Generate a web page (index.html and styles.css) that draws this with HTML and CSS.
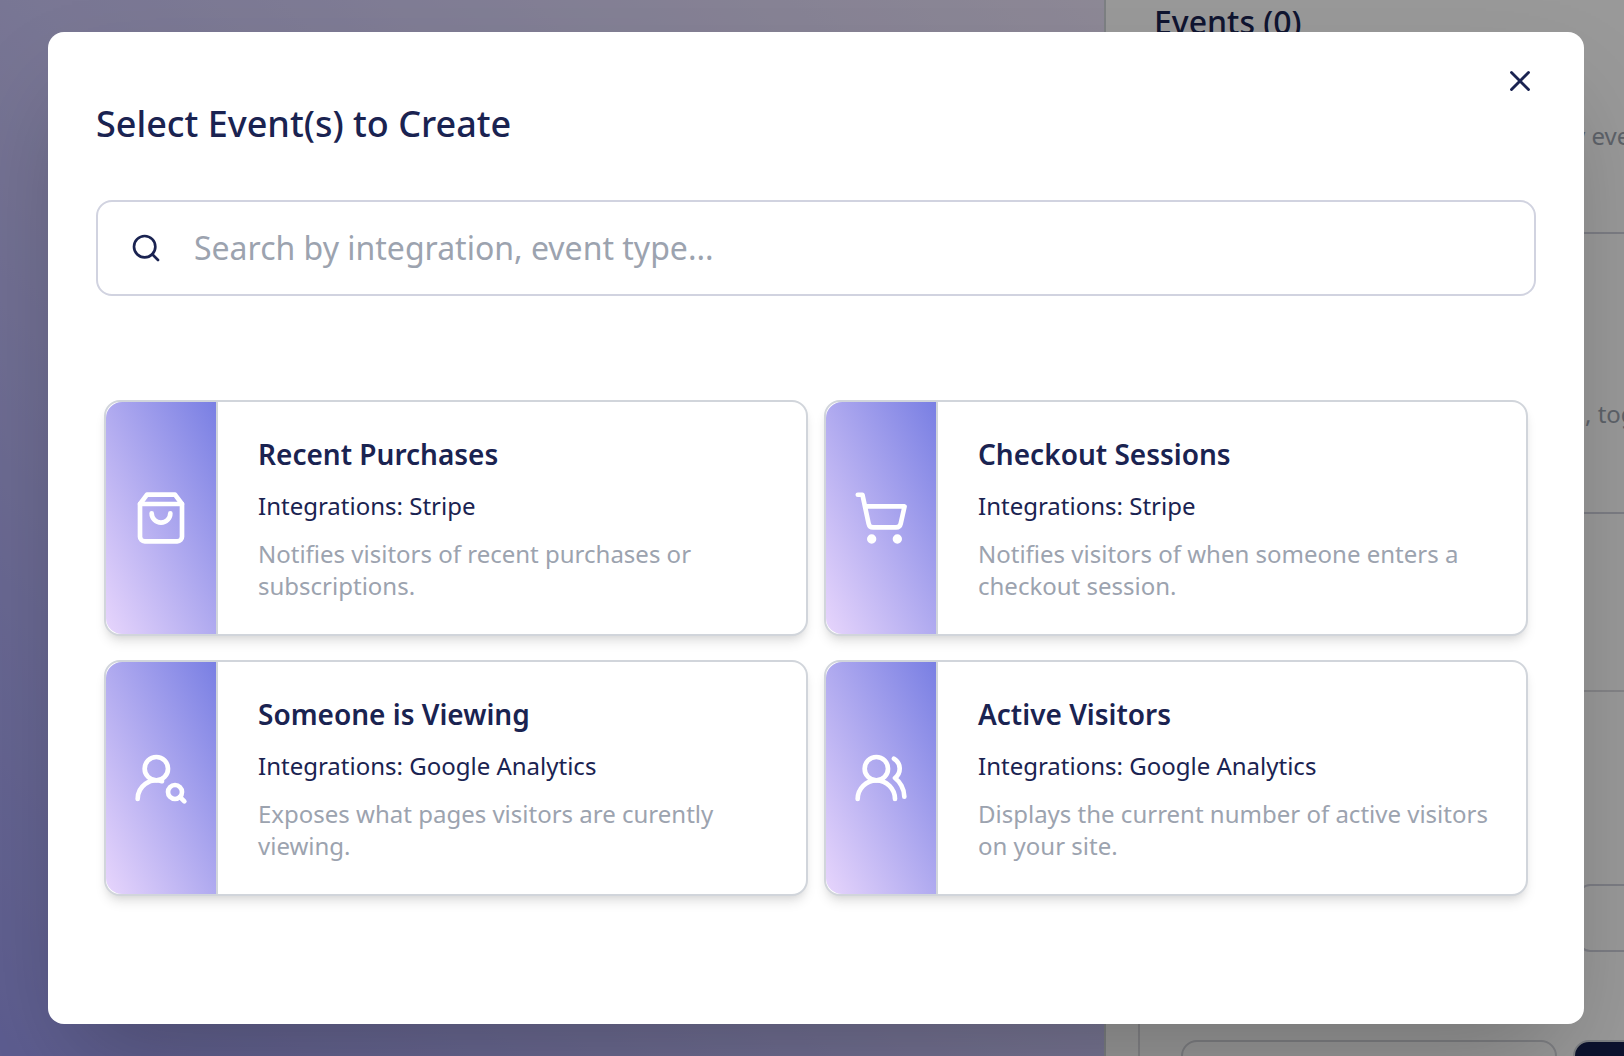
FILE: index.html
```html
<!DOCTYPE html>
<html lang="en">
<head>
<meta charset="utf-8">
<title>Select Event(s) to Create</title>
<link rel="stylesheet" href="styles.css">
</head>
<body>
<div class="page">
  <main class="preview"></main>
  <aside class="sidebar">
    <h2 class="sidebar-title">Events (0)</h2>
    <section class="block block-first"><p class="hint">y eve</p></section>
    <section class="block block-second"><p class="hint">, tog</p></section>
    <section class="block block-third"></section>
    <section class="block-fields"><div class="field"></div></section>
    <section class="footer-box">
      <div class="footer-input"></div>
      <div class="footer-button"></div>
    </section>
  </aside>
</div>
<div class="overlay">
  <div class="modal" role="dialog" aria-labelledby="modal-title">
    <button class="close" aria-label="Close">
      <svg viewBox="0 0 24 24"><path d="M18 6 6 18M6 6l12 12"/></svg>
    </button>
    <h1 class="modal-title" id="modal-title">Select Event(s) to Create</h1>
    <label class="search">
      <svg class="search-icon" viewBox="0 0 24 24"><circle cx="11" cy="11" r="8"/><path d="m21 21-4.3-4.3"/></svg>
      <input class="search-input" type="text" placeholder="Search by integration, event type...">
    </label>
    <div class="cards">
      <article class="card">
        <div class="card-icon"><svg viewBox="0 0 24 24"><path d="M6 2 3 6v14a2 2 0 0 0 2 2h14a2 2 0 0 0 2-2V6l-3-4Z"/><path d="M3 6h18"/><path d="M16 10a4 4 0 0 1-8 0"/></svg></div>
        <div class="card-body">
          <h3 class="card-title">Recent Purchases</h3>
          <p class="card-source">Integrations: Stripe</p>
          <p class="card-text">Notifies visitors of recent purchases or subscriptions.</p>
        </div>
      </article>
      <article class="card">
        <div class="card-icon"><svg viewBox="0 0 24 24"><circle cx="8" cy="21" r="1"/><circle cx="19" cy="21" r="1"/><path d="M2.05 2.05h2l2.66 12.42a2 2 0 0 0 2 1.58h9.78a2 2 0 0 0 1.95-1.57l1.65-7.43H5.12"/></svg></div>
        <div class="card-body">
          <h3 class="card-title">Checkout Sessions</h3>
          <p class="card-source">Integrations: Stripe</p>
          <p class="card-text">Notifies visitors of when someone enters a checkout session.</p>
        </div>
      </article>
      <article class="card">
        <div class="card-icon"><svg viewBox="0 0 24 24"><circle cx="10" cy="8" r="5"/><path d="M2 21a8 8 0 0 1 10.434-7.62"/><circle cx="18" cy="18" r="3"/><path d="m22 22-1.9-1.9"/></svg></div>
        <div class="card-body">
          <h3 class="card-title">Someone is Viewing</h3>
          <p class="card-source">Integrations: Google Analytics</p>
          <p class="card-text">Exposes what pages visitors are curently viewing.</p>
        </div>
      </article>
      <article class="card">
        <div class="card-icon"><svg viewBox="0 0 24 24"><path d="M18 21a8 8 0 0 0-16 0"/><circle cx="10" cy="8" r="5"/><path d="M22 20c0-3.37-2-6.5-4-8a5 5 0 0 0-.45-8.3"/></svg></div>
        <div class="card-body">
          <h3 class="card-title">Active Visitors</h3>
          <p class="card-source">Integrations: Google Analytics</p>
          <p class="card-text">Displays the current number of active visitors on your site.</p>
        </div>
      </article>
    </div>
  </div>
</div>
</body>
</html>
```
FILE: styles.css
```css
* { box-sizing: border-box; }
html, body { margin: 0; height: 100%; overflow: hidden; }
body {
  font-family: "Noto Sans", sans-serif;
  color: #1a2351;
}
h1, h2, h3, p { margin: 0; }
svg {
  display: block;
  fill: none;
  stroke: currentColor;
  stroke-width: 2;
  stroke-linecap: round;
  stroke-linejoin: round;
}

.page {
  display: grid;
  grid-template-columns: 1104px 520px;
  width: 1624px;
  height: 1056px;
  overflow: hidden;
}
.preview { background: linear-gradient(to top right, #9b9bf0, #c9c5f7 50%, #ece4fa); }
.sidebar {
  display: flex;
  flex-direction: column;
  height: 1056px;
  overflow: hidden;
  border-left: 2px solid #d1d5db;
  background: #fff;
}
.sidebar-title {
  height: 48px;
  padding-left: 48px;
  font-size: 32px;
  font-weight: 500;
  line-height: 44px;
}
.block { border-bottom: 2px solid #cfd0dc; }
.block-first { height: 186px; padding: 72px 0 0 467px; }
.block-second { height: 280px; padding: 164px 0 0 479px; }
.block-third { height: 178px; border-color: #dcdde2; }
.hint {
  font-size: 24px;
  line-height: 32px;
  color: #9ca3af;
  white-space: nowrap;
}
.block-fields { height: 260px; padding: 192px 0 0 472px; flex: none; }
.field {
  height: 68px;
  border: 2px solid #cfd0dc;
  border-right: 0;
  border-radius: 12px 0 0 12px;
}
.footer-box {
  display: grid;
  grid-template-columns: 376px 160px;
  gap: 16px;
  flex: none;
  height: 104px;
  margin-left: 32px;
  padding: 88px 0 0 41px;
  border-left: 2px solid #dcdde2;
}
.footer-input {
  height: 80px;
  border: 2px solid #d4d5dc;
  border-radius: 16px;
}
.footer-button {
  height: 80px;
  border: 2px solid #d1d5db;
  border-radius: 16px;
  background: #151e4e;
}

.overlay {
  position: absolute;
  inset: 0;
  padding: 32px 40px 32px 48px;
  background: rgba(0, 0, 0, .4);
  overflow: hidden;
}
.modal {
  position: relative;
  height: 992px;
  padding: 72px 48px 48px;
  border-radius: 16px;
  background: #fff;
  box-shadow: 0 50px 100px -24px rgba(0, 0, 0, .25);
}
.close {
  position: absolute;
  top: 32px;
  right: 47px;
  padding: 0;
  border: 0;
  background: none;
  color: inherit;
}
.close svg { width: 34px; height: 34px; }
.modal-title {
  font-size: 36px;
  font-weight: 500;
  line-height: 40px;
}
.search {
  display: flex;
  align-items: center;
  gap: 32px;
  height: 96px;
  margin-top: 56px;
  padding: 0 32px;
  border: 2px solid #d1d3e0;
  border-radius: 16px;
}
.search-icon { flex: none; width: 32px; height: 32px; }
.search-input {
  flex: 1;
  padding: 0;
  border: 0;
  outline: 0;
  background: none;
  font: 400 32px/44px "Noto Sans", sans-serif;
  color: inherit;
}
.search-input::placeholder { color: #9ca3af; opacity: 1; }

.cards {
  display: grid;
  grid-template-columns: 1fr 1fr;
  gap: 24px 16px;
  padding: 104px 8px 0;
}
.card {
  display: flex;
  height: 236px;
  border: 2px solid #d1d5db;
  border-radius: 16px;
  background: #fff;
  box-shadow: 0 8px 12px -2px rgba(0, 0, 0, .1), 0 4px 8px -4px rgba(0, 0, 0, .1);
}
.card-icon {
  display: flex;
  align-items: center;
  justify-content: center;
  flex: none;
  width: 112px;
  border-right: 2px solid #d1d5db;
  border-radius: 16px 0 0 16px;
  background: linear-gradient(to top right, #e7d5fc, #797fe3);
  color: #fff;
}
.card-icon svg { width: 56px; height: 56px; }
.card-body {
  display: flex;
  flex-direction: column;
  gap: 16px;
  padding: 32px 32px 32px 40px;
}
.card-title {
  font-size: 28px;
  font-weight: 600;
  line-height: 40px;
}
.card-source, .card-text {
  font-size: 24px;
  line-height: 32px;
}
.card-text { color: #9ca3af; }
```
